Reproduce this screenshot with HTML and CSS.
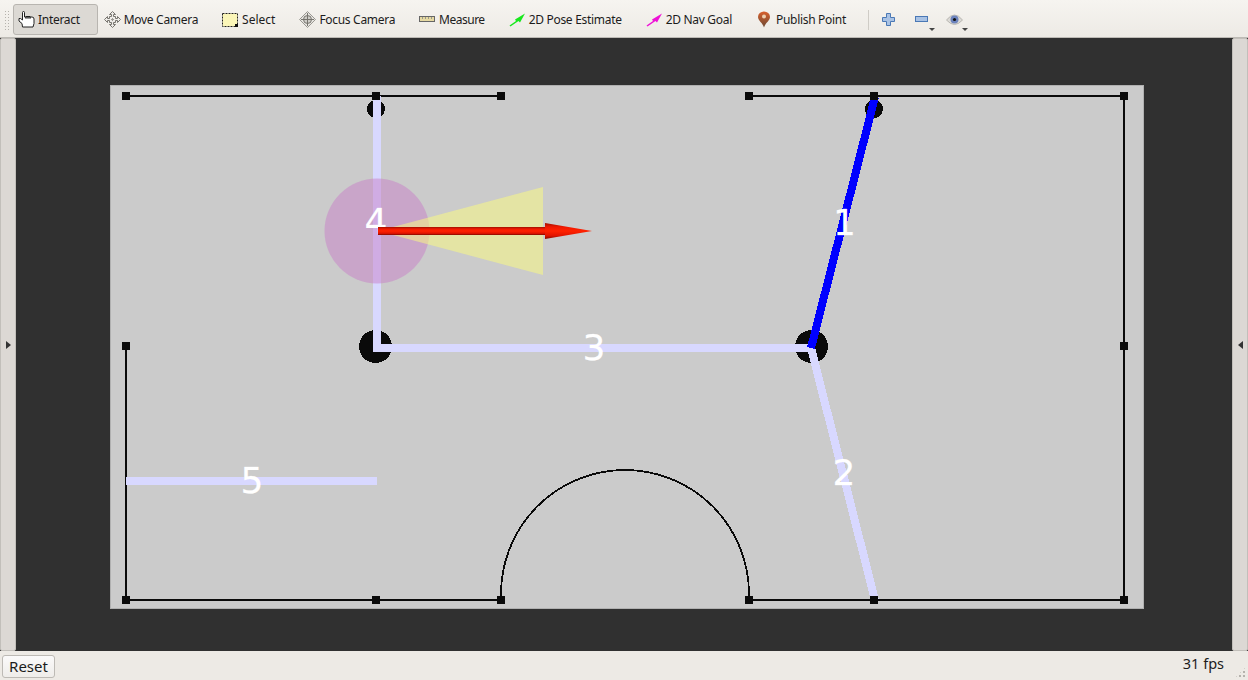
FILE: index.html
```html
<!DOCTYPE html>
<html lang="en">
<head>
    <meta charset="UTF-8">
    <title>RViz</title>
    <link rel="stylesheet" href="styles.css">
</head>
<body>
    <div class="toolbar">
        <div class="grip"></div>
        <div class="tool active">
            <svg class="icon" viewBox="0 0 17 17"><path d="M4.500 16 L4 12.500 L1 10 V7.500 H2.500 L4.500 9 V1.500 Q4.500 .5 5.500 .5 Q6.500 .5 6.500 1.500 V6 H8 V7.500 V5.500 H10 V7.500 V5.500 H12 V7.500 V6 H14 Q16 6 16 8 V12.500 L15 16 Z" fill="#fff" stroke="#222" stroke-width="1" stroke-linejoin="round"/></svg>
            <span>Interact</span>
        </div>
        <div class="tool">
            <svg class="icon" viewBox="0 0 17 17"><path d="M8.500 .5 L11.500 3.500 H9.500 V5.500 H11.500 V7.500 H13.500 V5.500 L16.500 8.500 L13.500 11.500 V9.500 H11.500 V11.500 H9.500 V13.500 H11.500 L8.500 16.500 L5.500 13.500 H7.500 V11.500 H5.500 V9.500 H3.500 V11.500 L.5 8.500 L3.500 5.500 V7.500 H5.500 V5.500 H7.500 V3.500 H5.500 Z" fill="#eeece8" stroke="#77756f" stroke-width="1"/><path d="M8.500 7 V10 M7 8.500 H10" stroke="#9a9892"/></svg>
            <span>Move Camera</span>
        </div>
        <div class="tool loose">
            <svg class="icon" viewBox="0 0 17 17"><rect x=".5" y="2.500" width="15" height="13" fill="#fbf6b8" stroke="#222" stroke-dasharray="2 1"/><rect x="13" y="13" width="3" height="3" fill="#111"/></svg>
            <span>Select</span>
        </div>
        <div class="tool">
            <svg class="icon" viewBox="0 0 17 17"><path d="M8.500 .5 L16.500 8.500 L8.500 16.500 L.5 8.500 Z" fill="#e8e6e2" stroke="#9a9892"/><circle cx="8.500" cy="8.500" r="4" fill="#cfcdc8" stroke="#77756f"/><path d="M8.500 2 V15 M2 8.500 H15" stroke="#77756f"/></svg>
            <span>Focus Camera</span>
        </div>
        <div class="tool tight">
            <svg class="icon" viewBox="0 0 17 17"><rect x=".5" y="5.500" width="15" height="5" fill="#e6d9a2" stroke="#666"/><path d="M3.500 6 V8 M6.500 6 V8 M9.500 6 V8 M12.500 6 V8" stroke="#998"/></svg>
            <span>Measure</span>
        </div>
        <div class="tool">
            <svg class="icon" viewBox="0 0 17 17"><path d="M.5 14.500 L7 10 L6 8.500 L16 2.500 L11 11.500 L9.500 10 L1.500 15.500 Z" fill="#17e81d"/></svg>
            <span>2D Pose Estimate</span>
        </div>
        <div class="tool">
            <svg class="icon" viewBox="0 0 17 17"><path d="M.5 14.500 L7 10 L6 8.500 L16 2.500 L11 11.500 L9.500 10 L1.500 15.500 Z" fill="#ee12d6"/></svg>
            <span>2D Nav Goal</span>
        </div>
        <div class="tool">
            <svg class="icon" viewBox="0 0 17 17"><defs><linearGradient id="pinFill" x1="0" y1="0" x2="0" y2="1"><stop offset="0" stop-color="#d8602c"/><stop offset="1" stop-color="#6b4a35"/></linearGradient></defs><path d="M8 16.500 C6.800 12 2 9.500 2 6 A6 5.500 0 0 1 14 6 C14 9.500 9.200 12 8 16.500 Z" fill="url(#pinFill)"/><circle cx="8" cy="5.500" r="2" fill="#edd0b0"/></svg>
            <span>Publish Point</span>
        </div>
        <div class="separator"></div>
        <div class="small-tool plus-tool">
            <svg class="icon" viewBox="0 0 13 13"><path d="M4.500 .5 H8.500 V4.500 H12.500 V8.500 H8.500 V12.500 H4.500 V8.500 H.5 V4.500 H4.500 Z" fill="#a9c2e4" stroke="#4a78b5"/></svg>
        </div>
        <div class="small-tool minus-tool">
            <svg class="icon" viewBox="0 0 13 13"><rect x=".5" y="3.500" width="12" height="5" fill="#a9c2e4" stroke="#4a78b5"/></svg>
            <div class="menu-arrow"></div>
        </div>
        <div class="small-tool eye-tool">
            <svg class="icon" viewBox="0 0 17 14"><path d="M.5 7 Q8.500 -3 16.500 7 Q8.500 16 .5 7 Z" fill="#dcdad6" stroke="#b9b7b2"/><circle cx="8.500" cy="6.500" r="4" fill="#6c83bd"/><circle cx="8.500" cy="6.500" r="1.600" fill="#111"/></svg>
            <div class="menu-arrow"></div>
        </div>
    </div>

    <div class="main">
        <div class="side-handle"><div class="arrow-right"></div></div>

        <!-- map view, coordinates are page pixels -->
        <svg class="view" viewBox="16 38 1216 613">
            <defs>
                <linearGradient id="shaftRed" x1="0" y1="0" x2="0" y2="1">
                    <stop offset="0" stop-color="#a01000"/>
                    <stop offset=".25" stop-color="#f01800"/>
                    <stop offset=".5" stop-color="#ff2200"/>
                    <stop offset=".8" stop-color="#e01400"/>
                    <stop offset="1" stop-color="#800a00"/>
                </linearGradient>
            </defs>
            <rect x="110.500" y="85.500" width="1033" height="523" fill="#cbcbcb" stroke="#b0b0b0"/>

            <g class="walls">
                <path d="M126 96 H501 M749 96 H1124 V600 H749 M501 600 H126 V346"/>
                <path class="arc" d="M501 600 V594 A124 124 0 0 1 749 594 V600"/>
            </g>
            <g class="posts">
                <circle cx="376" cy="109" r="9"/>
                <circle cx="874" cy="109" r="9"/>
                <circle cx="375.500" cy="346.500" r="16.500"/>
                <circle cx="811.500" cy="346.500" r="16.500"/>
            </g>
            <g class="edges">
                <path d="M377 96 V348 H811 L875 600"/>
                <path d="M126 481 H377"/>
                <path class="edge-active" d="M811 348 L875 97"/>
            </g>
            <g class="posts">
                <rect x="122" y="92" width="8" height="8"/>
                <rect x="372" y="92" width="8" height="8"/>
                <rect x="497" y="92" width="8" height="8"/>
                <rect x="745" y="92" width="8" height="8"/>
                <rect x="870" y="92" width="8" height="8"/>
                <rect x="1120" y="92" width="8" height="8"/>
                <rect x="122" y="342" width="8" height="8"/>
                <rect x="1120" y="342" width="8" height="8"/>
                <rect x="122" y="596" width="8" height="8"/>
                <rect x="372" y="596" width="8" height="8"/>
                <rect x="497" y="596" width="8" height="8"/>
                <rect x="745" y="596" width="8" height="8"/>
                <rect x="870" y="596" width="8" height="8"/>
                <rect x="1120" y="596" width="8" height="8"/>
            </g>

            <circle class="robot" cx="377" cy="231" r="52.500"/>
            <polygon class="cone" points="378,231 543,187 543,275"/>

            <g class="labels">
                <text x="376" y="234">4</text>
                <text x="594" y="360">3</text>
                <text x="844.500" y="235">1</text>
                <text x="844" y="485">2</text>
                <text x="252" y="493">5</text>
            </g>

            <rect x="378" y="227" width="168" height="8" fill="url(#shaftRed)"/>
            <polygon points="545,223 592,231 545,239" fill="url(#shaftRed)"/>
        </svg>

        <div class="side-handle"><div class="arrow-left"></div></div>
    </div>

    <div class="statusbar">
        <button class="reset" type="button">Reset</button>
        <span class="fps">31 fps</span>
        <div class="size-grip"></div>
    </div>
</body>
</html>
```

FILE: styles.css
```css
* {
    box-sizing: border-box;
}
html, body {
    margin: 0;
    height: 100%;
}
body {
    width: 1248px;
    height: 680px;
    overflow: hidden;
    display: flex;
    flex-direction: column;
    font-family: "Noto Sans", sans-serif;
    background-color: #edeae5;
    color: #1c1c1c;
}

/* Toolbar */
.toolbar {
    height: 38px;
    flex: none;
    display: flex;
    align-items: center;
    padding: 3px 0 1px 4px;
    background: linear-gradient(#f6f4f0, #edeae5);
    border-bottom: 1px solid #bdbab5;
}
.grip {
    width: 5px;
    height: 20px;
    margin-right: 4px;
    background-image: radial-gradient(#b5b2ac 40%, transparent 45%);
    background-size: 3px 3px;
}
.tool {
    height: 31px;
    display: flex;
    align-items: center;
    gap: 3px;
    padding: 0 17px 0 4px;
    margin-right: 1px;
    border: 1px solid transparent;
    border-radius: 3px;
    font-size: 12px;
    letter-spacing: -0.3px;
    white-space: nowrap;
}
.tool.loose {
    letter-spacing: 0;
}
.tool.tight {
    letter-spacing: -0.5px;
}
.tool.active {
    background-color: #dcd9d4;
    border-color: #b8b5b0;
}
.icon {
    width: 17px;
    height: 17px;
    flex: none;
}
.separator {
    width: 1px;
    height: 20px;
    margin: 0 13px 0 3px;
    background-color: #cfccc6;
}
.small-tool {
    position: relative;
    display: flex;
    align-items: center;
}
.small-tool .icon {
    width: 13px;
    height: 13px;
}
.plus-tool {
    margin-right: 20px;
}
.minus-tool {
    margin-right: 18px;
}
.small-tool.eye-tool .icon {
    width: 17px;
    height: 14px;
}
.menu-arrow {
    position: absolute;
    left: 14px;
    top: 15px;
    border-style: solid;
    border-width: 3px 3px 0;
    border-color: #444 transparent transparent;
}
.eye-tool .menu-arrow {
    left: 16px;
}

/* Main area */
.main {
    flex: 1;
    min-height: 0;
    display: flex;
    background-color: #303030;
}
.view {
    flex: 1;
    min-width: 0;
    height: 100%;
    display: block;
}
.side-handle {
    width: 16px;
    flex: none;
    display: flex;
    align-items: center;
    justify-content: center;
    background-color: #dcd8d4;
    border: 1px solid #c2bfba;
    border-radius: 2px;
}
.arrow-right {
    border-style: solid;
    border-width: 4px 0 4px 5px;
    border-color: transparent transparent transparent #333;
}
.arrow-left {
    border-style: solid;
    border-width: 4px 5px 4px 0;
    border-color: transparent #333 transparent transparent;
}

/* Map drawing */
.walls path {
    fill: none;
    stroke: #0a0a0a;
    stroke-width: 2;
    shape-rendering: crispEdges;
}
.walls .arc {
    stroke-width: 1.800;
}
.posts {
    fill: #0a0a0a;
    shape-rendering: crispEdges;
}
.edges path {
    fill: none;
    stroke: #d8d8ff;
    stroke-width: 8;
    shape-rendering: crispEdges;
}
.edges .edge-active {
    stroke: #0000ff;
}
.labels text {
    font-family: "DejaVu Sans", sans-serif;
    font-size: 36px;
    fill: #ffffff;
    stroke: #ffffff;
    stroke-width: 0.3;
    stroke-opacity: 0.6;
    text-anchor: middle;
}
.robot {
    fill: rgba(199, 127, 199, 0.5);
}
.cone {
    fill: rgba(253, 253, 125, 0.5);
}

/* Status bar */
.statusbar {
    height: 29px;
    flex: none;
    position: relative;
    display: flex;
    align-items: center;
    justify-content: space-between;
    padding: 0 24px 0 2px;
}
.reset {
    width: 53px;
    height: 23px;
    margin-top: 2px;
    padding: 0 0 2px;
    font-family: "Noto Sans", sans-serif;
    font-size: 15px;
    color: #1c1c1c;
    background: linear-gradient(#fbfafa, #efedea);
    border: 1px solid #bdbab5;
    border-radius: 3px;
}
.fps {
    font-size: 14.5px;
    margin-top: -5px;
}
.size-grip {
    position: absolute;
    right: 1px;
    bottom: 1px;
    width: 13px;
    height: 13px;
    background-image: radial-gradient(#b5b2ac 40%, transparent 45%);
    background-size: 4px 4px;
    clip-path: polygon(100% 0, 100% 100%, 0 100%);
}
```
